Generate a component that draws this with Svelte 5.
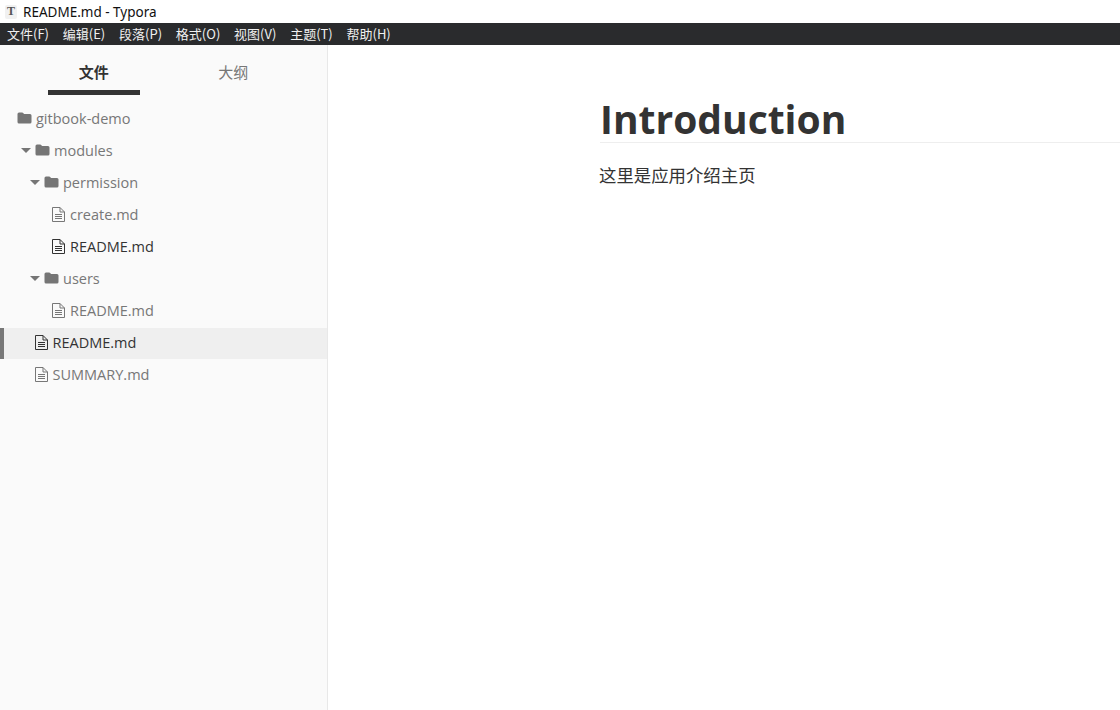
<script>
  const menus = ['文件(F)', '编辑(E)', '段落(P)', '格式(O)', '视图(V)', '主题(T)', '帮助(H)'];

  // level is the indent step, open marks folders that show the caret
  const tree = [
    { name: 'gitbook-demo', type: 'folder', level: 0 },
    { name: 'modules', type: 'folder', level: 1, open: true },
    { name: 'permission', type: 'folder', level: 2, open: true },
    { name: 'create.md', type: 'file', level: 3 },
    { name: 'README.md', type: 'file', level: 3, dark: true },
    { name: 'users', type: 'folder', level: 2, open: true },
    { name: 'README.md', type: 'file', level: 3 },
    { name: 'README.md', type: 'file', level: 1, dark: true, active: true },
    { name: 'SUMMARY.md', type: 'file', level: 1 }
  ];
</script>

<div class="window">
  <div class="titlebar">
    <span class="app-icon">T</span>
    <span class="title">README.md - Typora</span>
  </div>

  <div class="menubar">
    {#each menus as menu}
      <span class="menu-item">{menu}</span>
    {/each}
  </div>

  <div class="main">
    <aside class="sidebar">
      <div class="tabs">
        <div class="tab selected"><span>文件</span></div>
        <div class="tab"><span>大纲</span></div>
      </div>

      <ul class="tree">
        {#each tree as item}
          <li class="row l{item.level}" class:active={item.active} class:dark={item.dark} class:doc={item.type === 'file'}>
            {#if item.open}
              <span class="caret"></span>
            {/if}
            {#if item.type === 'folder'}
              <svg class="folder" width="15" height="12" viewBox="0 0 15 12">
                <path d="M0.5 2 Q0.5 0.5 2 0.5 H5 Q6 0.5 6.6 1.4 L7.1 2 H13 Q14.5 2 14.5 3.5 V10 Q14.5 11.5 13 11.5 H2 Q0.5 11.5 0.5 10 Z" fill="#757575" />
              </svg>
            {:else}
              <svg class="file" width="13" height="15" viewBox="0 0 13 15" fill="none" stroke="currentColor" stroke-width="1">
                <path d="M0.5 0.5 H8 L12.5 5 V14.5 H0.5 Z" />
                <path d="M8 0.5 V5 H12.5" />
                <path d="M3 7.5 H10 M3 9.5 H10 M3 11.5 H10" />
              </svg>
            {/if}
            <span class="name">{item.name}</span>
          </li>
        {/each}
      </ul>
    </aside>

    <main class="content">
      <h1>Introduction</h1>
      <p>这里是应用介绍主页</p>
    </main>
  </div>
</div>

<style>
  :global(body) {
    margin: 0;
    background: #fff;
  }

  .window {
    width: 1120px;
    height: 710px;
    display: flex;
    flex-direction: column;
    overflow: hidden;
    font-family: "Open Sans", "Noto Sans CJK SC", sans-serif;
    color: #333;
  }

  .titlebar {
    height: 23px;
    flex-shrink: 0;
    display: flex;
    align-items: center;
    padding-left: 5px;
    background: #fff;
    font-family: "Noto Sans", "Noto Sans CJK SC", sans-serif;
    font-size: 13.5px;
    color: #111;
  }

  .app-icon {
    width: 12px;
    height: 14px;
    margin-right: 6px;
    display: flex;
    align-items: center;
    justify-content: center;
    background: #f1f1f1;
    border-radius: 2px;
    font-family: "Liberation Serif", serif;
    font-size: 12px;
    font-weight: 700;
    color: #555;
  }

  .menubar {
    height: 22px;
    flex-shrink: 0;
    display: flex;
    align-items: center;
    gap: 13.8px;
    padding: 0 0 2px 7px;
    box-sizing: border-box;
    background: #2a2b2d;
    font-family: "Noto Sans CJK SC", sans-serif;
    font-size: 13px;
    color: #f0f0f0;
  }

  .main {
    flex: 1;
    display: flex;
    min-height: 0;
  }

  .sidebar {
    width: 327px;
    flex-shrink: 0;
    background: #fafafa;
    border-right: 1px solid #e8e8e8;
  }

  .tabs {
    display: flex;
    padding: 0 24px;
    height: 50px;
    font-family: "Noto Sans CJK SC", sans-serif;
    font-size: 15px;
    color: #777;
  }

  .tab {
    flex: 1;
    display: flex;
    justify-content: center;
  }

  .tab span {
    width: 92px;
    height: 45px;
    line-height: 54px;
    text-align: center;
    box-sizing: border-box;
  }

  .tab.selected span {
    color: #333;
    font-weight: 700;
    border-bottom: 5px solid #333;
    height: 50px;
  }

  .tree {
    list-style: none;
    margin: 9px 0 0;
    padding: 0;
  }

  .row {
    height: 32px;
    display: flex;
    align-items: center;
    box-sizing: border-box;
    font-size: 14.5px;
    color: #777;
    padding-bottom: 4px;
  }

  .row.l0 { padding-left: 17px; }
  .row.l1 { padding-left: 21px; }
  .row.l2 { padding-left: 30px; }
  .row.l3 { padding-left: 52px; }

  .row.l1.doc { padding-left: 35px; }

  .row.dark {
    color: #333;
  }

  .row.active {
    height: 31px;
    margin-bottom: 1px;
    padding-bottom: 3px;
    background: #efefef;
    box-shadow: inset 4px 0 0 #777;
  }

  .caret {
    width: 0;
    height: 0;
    margin-right: 4px;
    border-left: 5px solid transparent;
    border-right: 5px solid transparent;
    border-top: 5px solid #757575;
  }

  .folder {
    margin-right: 4px;
  }

  .file {
    margin-right: 5px;
  }

  .row.l1.doc .file {
    margin-right: 4.5px;
  }

  .content {
    flex: 1;
    min-width: 0;
    padding: 47px 0 0 272px;
  }

  h1 {
    margin: 0;
    height: 50px;
    line-height: 54px;
    font-size: 39px;
    font-weight: 700;
    color: #333;
    border-bottom: 1px solid #eee;
  }

  p {
    margin: 18px 0 0 -1px;
    font-size: 17.4px;
    line-height: 28px;
    color: #333;
  }
</style>
